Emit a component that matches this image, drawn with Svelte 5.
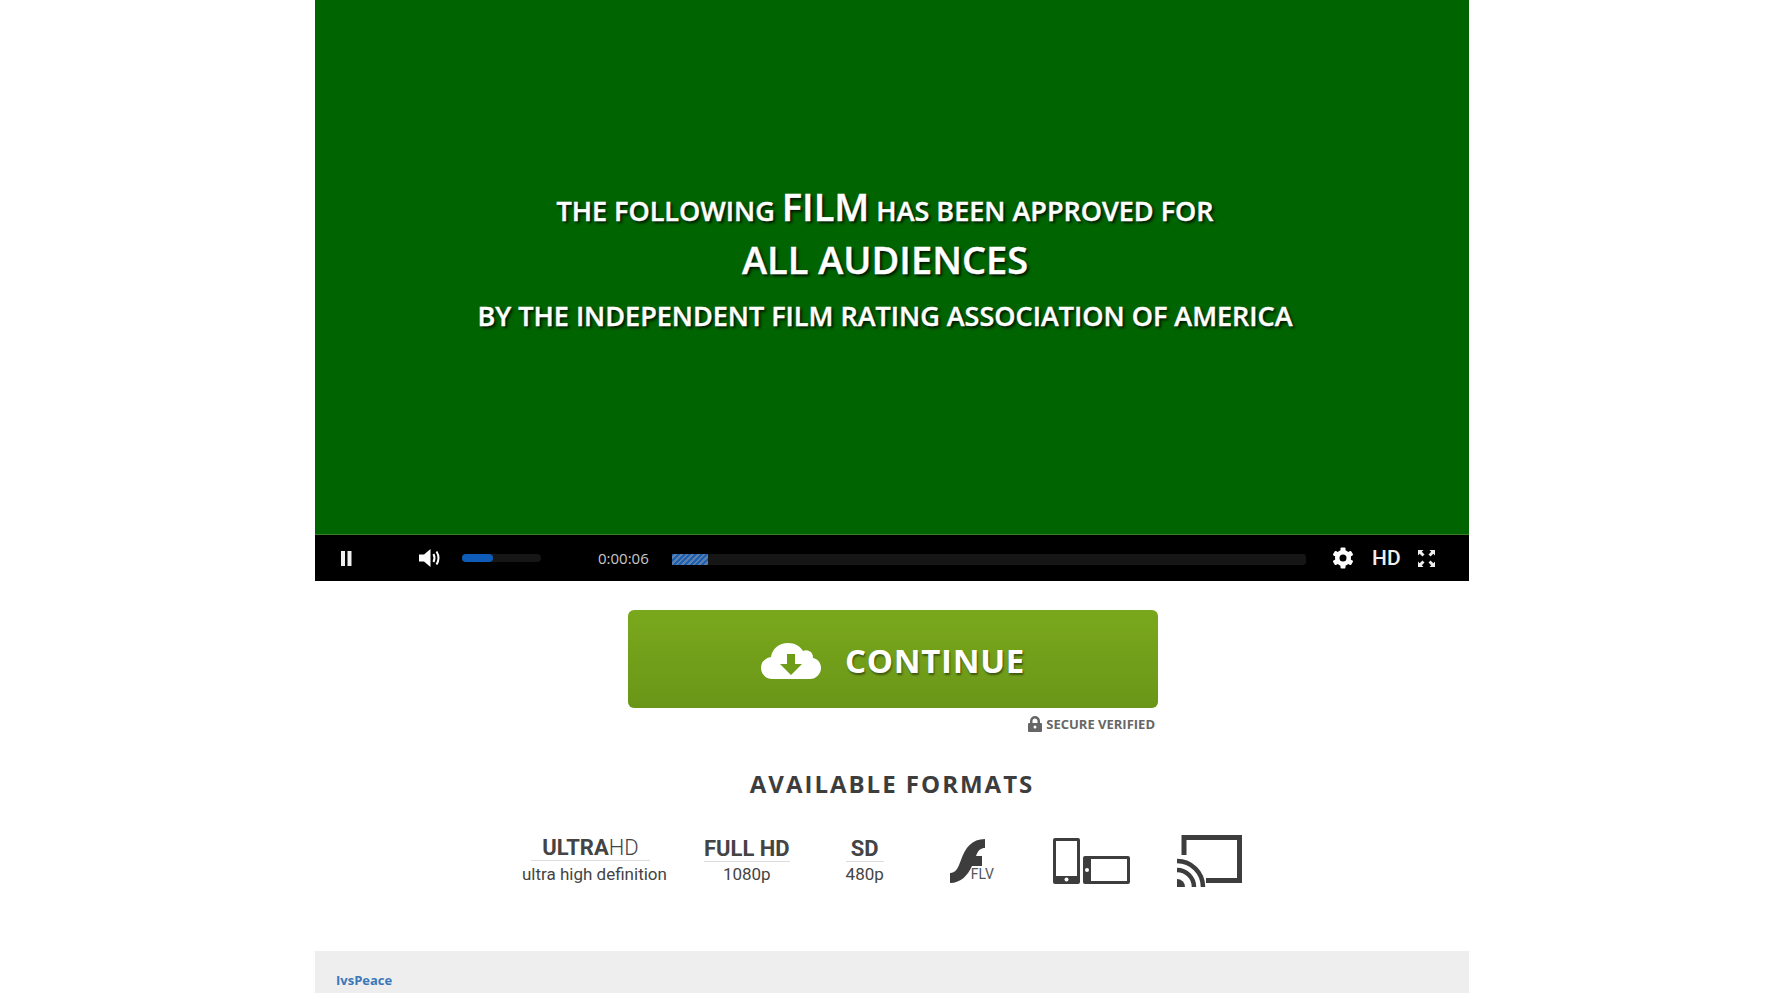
<script>
	const formats = [
		{ cls: 'uhd', bold: 'ULTRA', light: 'HD', sub: 'ultra high definition' },
		{ cls: 'fhd', bold: 'FULL HD', light: '', sub: '1080p' },
		{ cls: 'sd', bold: 'SD', light: '', sub: '480p' }
	];
</script>

<div class="page">
	<div class="player">
		<div class="video">
			<p class="line one">THE FOLLOWING <span class="big">FILM</span> HAS BEEN APPROVED FOR</p>
			<p class="line two">ALL AUDIENCES</p>
			<p class="line three">BY THE INDEPENDENT FILM RATING ASSOCIATION OF AMERICA</p>
		</div>
		<div class="controls">
			<svg class="pause" width="12" height="15" viewBox="0 0 12 15"><rect x="0" y="0" width="4" height="15" fill="#eee" /><rect x="6.500" y="0" width="4" height="15" fill="#eee" /></svg>
			<svg class="speaker" width="24" height="20" viewBox="0 0 24 20">
				<path d="M0 6.500h5L11.500 1v18L5 13.500H0z" fill="#fff" />
				<path d="M14.500 6q2 4 0 8M17.500 3.500q4 6.500 0 13" fill="none" stroke="#fff" stroke-width="2" />
			</svg>
			<div class="volume"><div class="volume-fill"></div></div>
			<span class="time">0:00:06</span>
			<div class="seek"><div class="seek-fill"></div></div>
			<svg class="gear" width="22" height="22" viewBox="0 0 22 22">
				<g fill="#fff">
					<circle cx="11" cy="11" r="8" />
					<rect x="8.500" y="0.500" width="5" height="21" rx="1" />
					<rect x="8.500" y="0.500" width="5" height="21" rx="1" transform="rotate(60 11 11)" />
					<rect x="8.500" y="0.500" width="5" height="21" rx="1" transform="rotate(120 11 11)" />
				</g>
				<circle cx="11" cy="11" r="3.500" fill="#000" />
			</svg>
			<span class="hd">HD</span>
			<svg class="full" width="17" height="17" viewBox="0 0 17 17" fill="#eee">
				<path d="M0 0h5.500L3.800 1.700l2.700 2.700-2.100 2.100-2.700-2.700L0 5.500zM17 0v5.500l-1.700-1.700-2.700 2.700-2.100-2.100 2.700-2.700L11.500 0zM0 17v-5.500l1.700 1.700 2.700-2.700 2.100 2.100-2.700 2.700L5.500 17zM17 17h-5.500l1.700-1.700-2.700-2.700 2.100-2.100 2.700 2.700 1.700-1.700z" />
			</svg>
		</div>
	</div>

	<div class="cta">
		<button class="continue">
			<svg width="60" height="36" viewBox="0 0 60 36">
				<path d="M11 36C5 36 0 31 0 25c0-6 4-10 10-11 1-8 8-14 17-14 7 0 12 3 15 8 2-1 4-1 6 0 3 1 4 4 4 7 5 1 8 5 8 10 0 6-5 11-11 11z" fill="#fff" />
				<path d="M26 11h8v10h7L30 32 19 21h7z" fill="#6f9c19" />
			</svg>
			<span>CONTINUE</span>
		</button>
		<div class="secure">
			<svg width="14" height="16" viewBox="0 0 14 16">
				<path d="M2 7V5a5 5 0 0 1 10 0v2h1a1 1 0 0 1 1 1v7a1 1 0 0 1-1 1H1a1 1 0 0 1-1-1V8a1 1 0 0 1 1-1zm2.500 0h5V5a2.500 2.500 0 0 0-5 0z" fill="#666" fill-rule="evenodd" />
				<circle cx="7" cy="11" r="1.500" fill="#fff" />
			</svg>
			<span>SECURE VERIFIED</span>
		</div>
	</div>

	<h2>AVAILABLE FORMATS</h2>

	<div class="formats">
		{#each formats as f}
			<div class="format {f.cls}">
				<div class="name">{f.bold}<span class="light">{f.light}</span></div>
				<div class="sub">{f.sub}</div>
			</div>
		{/each}

		<div class="flash">
			<svg width="35" height="44" viewBox="0 0 35 44">
				<path d="M35 0v9c-4 0-7 2-9 8h6v10H22C18 36 11 44 0 44V34c6 0 8-5 11-13C15 9 22 0 35 0z" fill="#3d3d3d" />
			</svg>
			<span>FLV</span>
		</div>

		<svg class="devices" width="77" height="46" viewBox="0 0 77 46" fill="#3d3d3d">
			<path fill-rule="evenodd" d="M2 0h23a2 2 0 0 1 2 2v42a2 2 0 0 1-2 2H2a2 2 0 0 1-2-2V2a2 2 0 0 1 2-2zm1 3v35h21V3z" />
			<circle cx="13.500" cy="41.500" r="2" fill="#fff" />
			<path fill-rule="evenodd" d="M32 18h43a2 2 0 0 1 2 2v24a2 2 0 0 1-2 2H32a2 2 0 0 1-2-2V20a2 2 0 0 1 2-2zm6 3v22h36V21z" />
			<circle cx="34" cy="32" r="2" fill="#fff" />
		</svg>

		<svg class="cast" width="65" height="52" viewBox="0 0 65 52" fill="none" stroke="#3d3d3d">
			<path d="M7 20V2.500h55.500v43H29" stroke-width="5" />
			<path d="M0 26a26 26 0 0 1 26 26M0 35a17 17 0 0 1 17 17" stroke-width="4.500" />
			<path d="M0 44a8 8 0 0 1 8 8H0z" fill="#3d3d3d" stroke="none" />
		</svg>
	</div>

	<div class="footer">
		<a href="#top">IvsPeace</a>
	</div>
</div>

<style>
	:global(body) {
		margin: 0;
		background: #fff;
		overflow: hidden;
	}

	.page {
		width: 1154px;
		height: 993px;
		margin-left: 315px;
		font-family: 'Open Sans', sans-serif;
		overflow: hidden;
	}

	.video {
		height: 535px;
		background: #006400;
		border-bottom: 1px solid #3b7a2a;
		box-sizing: border-box;
		display: flex;
		flex-direction: column;
		align-items: center;
		padding-top: 185px;
		padding-right: 14px;
		color: #fff;
	}

	.line {
		margin: 0;
		font-weight: 600;
		text-shadow: 2px 2px 3px rgba(0, 0, 0, 0.85);
		-webkit-text-stroke: 0.4px #fff;
		white-space: nowrap;
	}

	.one {
		font-size: 27px;
		line-height: 42px;
	}

	.big {
		font-size: 38px;
	}

	.two {
		font-size: 38px;
		line-height: 50px;
		margin-top: 2px;
	}

	.three {
		font-size: 27px;
		line-height: 40px;
		margin-top: 12px;
	}

	.controls {
		height: 46px;
		background: #000;
		display: flex;
		align-items: center;
	}

	.pause {
		margin-left: 26px;
	}

	.speaker {
		margin-left: 66px;
	}

	.volume {
		width: 79px;
		height: 8px;
		margin-left: 19px;
		border-radius: 4px;
		background: #161616;
	}

	.volume-fill {
		width: 31px;
		height: 100%;
		border-radius: 4px;
		background: #0e5cb8;
	}

	.time {
		margin: -1px 0 0 57px;
		width: 47px;
		font-size: 15px;
		white-space: nowrap;
		color: #c8c8c8;
	}

	.seek {
		width: 634px;
		height: 11px;
		margin: 2px 0 0 27px;
		border-radius: 3px;
		background: #161616;
	}

	.seek-fill {
		width: 36px;
		height: 100%;
		background: repeating-linear-gradient(135deg, #1d5fb0 0 2px, #5c7fae 2px 4px);
	}

	.gear {
		margin-left: 26px;
	}

	.hd {
		margin-left: 18px;
		font-family: 'Roboto', sans-serif;
		font-size: 21px;
		font-weight: 500;
		color: #eee;
	}

	.full {
		margin-left: 17px;
	}

	.cta {
		width: 530px;
		margin: 29px 0 0 313px;
	}

	.continue {
		width: 100%;
		height: 98px;
		border: none;
		border-radius: 6px;
		background: linear-gradient(#7aa81c, #6a9618);
		display: flex;
		align-items: center;
		justify-content: center;
		gap: 24px;
		color: #fff;
		font-family: 'Open Sans', sans-serif;
		font-size: 33px;
		font-weight: 700;
		letter-spacing: 0.7px;
		text-shadow: 1px 2px 2px rgba(0, 0, 0, 0.45);
		padding: 3px 0 0 0;
	}

	.secure {
		display: flex;
		justify-content: flex-end;
		align-items: center;
		gap: 4px;
		margin: 7px 3px 0 0;
		font-size: 13px;
		font-weight: 700;
		color: #666;
	}

	h2 {
		margin: 34px 0 0;
		text-align: center;
		font-size: 24px;
		line-height: 33px;
		font-weight: 700;
		letter-spacing: 2px;
		color: #3d3d3d;
	}

	.formats {
		display: flex;
		align-items: center;
		margin-top: 33px;
		height: 56px;
		padding-left: 207px;
		font-family: 'Roboto', sans-serif;
		color: #444;
	}

	.format {
		text-align: center;
	}

	.name {
		font-size: 22px;
		font-weight: 700;
		line-height: 25px;
		border-bottom: 1px solid #ddd;
	}

	.light {
		font-weight: 300;
	}

	.sub {
		font-size: 17px;
		line-height: 25px;
	}

	.uhd .name {
		margin: -1px 17px 1px 9px;
	}

	.fhd {
		margin-left: 37px;
	}

	.sd {
		margin-left: 56px;
	}

	.flash {
		margin-left: 66px;
		display: flex;
		align-items: flex-end;
		width: 42px;
	}

	.flash svg {
		flex-shrink: 0;
	}

	.flash span {
		font-size: 14px;
		font-weight: 400;
		margin: 0 0 1px -14px;
		color: #555;
	}

	.devices {
		margin-left: 61px;
	}

	.cast {
		margin-left: 47px;
	}

	.footer {
		margin-top: 62px;
		height: 60px;
		background: #eee;
		padding: 17px 21px;
		box-sizing: border-box;
	}

	.footer a {
		font-size: 13px;
		font-weight: 700;
		color: #3a78b9;
		text-decoration: none;
	}
</style>
